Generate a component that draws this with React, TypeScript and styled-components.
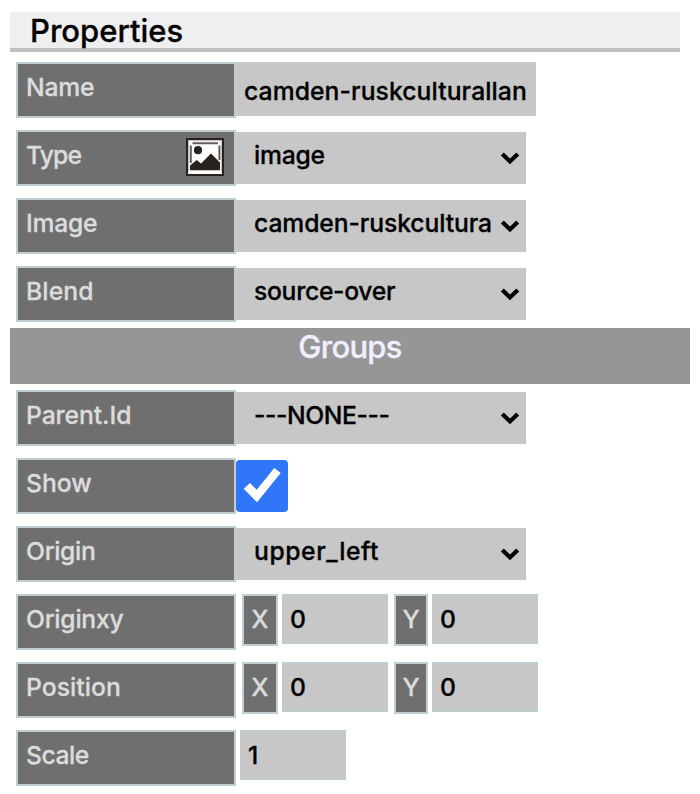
import React from "react";
import styled, { createGlobalStyle } from "styled-components";

const GlobalStyle = createGlobalStyle`
  *, *::before, *::after { box-sizing: border-box; }
  body { margin: 0; background: #fff; }
`;

const Panel = styled.main`
  width: 700px;
  height: 794px;
  overflow: hidden;
  padding: 12px 10px 0;
  background: #fff;
  color: #000;
  font: 500 24.7px/36px Inter, "Liberation Sans", sans-serif;
  -webkit-text-stroke: 0.3px currentColor;
  white-space: nowrap;
`;

const Header = styled.h1`
  width: 670px;
  height: 40px;
  margin: 0;
  padding-left: 20px;
  background: #efefef;
  border-bottom: 4px solid #bfbfbf;
  font-size: 31px;
  font-weight: 500;
  line-height: 38px;
`;

const Section = styled.section`
  display: flex;
  flex-direction: column;
  gap: 12px;
  padding: 10px 6px 6px;
`;

const GroupSection = styled(Section)`
  padding-top: 6px;
`;

const GroupBar = styled.h2`
  height: 56px;
  margin: 0;
  background: #969696;
  color: #f0eeff;
  text-align: center;
  font-size: 31px;
  font-weight: 500;
  line-height: 38px;
  letter-spacing: -0.72px;
`;

const Row = styled.div`
  display: flex;
  align-items: flex-start;
  height: 56px;
`;

const Label = styled.div`
  display: flex;
  justify-content: space-between;
  width: 220px;
  height: 56px;
  padding: 5px 10px 0 8px;
  background: #6f6f6f;
  border: 2px solid #bfcfcf;
  color: #dcdcdc;
`;

const Tracked = styled.span<{ $track?: number }>`
  letter-spacing: ${({ $track = 0 }) => $track}px;
`;

const NameField = styled.div`
  width: 300px;
  height: 54px;
  padding: 11px 0 0 8px;
  overflow: hidden;
  background: #c7c7c7;
`;

const Select = styled.div`
  display: flex;
  justify-content: space-between;
  width: 290px;
  height: 52px;
  margin-top: 2px;
  padding: 5px 6px 0 18px;
  background: #c7c7c7;
`;

const Chevron = styled.svg`
  width: 20px;
  height: 14px;
  margin-top: 14px;
`;

const PictureIcon = styled.svg`
  width: 38px;
  height: 38px;
  margin-top: 1px;
`;

const Checkbox = styled.div`
  width: 52px;
  height: 52px;
  margin-top: 2px;
  border-radius: 4px;
  background: #2f76f8;
`;

const Axis = styled.div<{ $width: number }>`
  width: ${({ $width }) => $width}px;
  height: 52px;
  margin-left: 6px;
  padding-top: 5px;
  background: #6f6f6f;
  border: 2px solid #bfcfcf;
  color: #dcdcdc;
  text-align: center;
`;

const NumberField = styled.div`
  width: 106px;
  height: 50px;
  margin-left: 4px;
  padding: 5px 0 0 8px;
  background: #c7c7c7;
  border: solid #bfcfcf;
  border-width: 2px 0;
`;

interface FieldProps {
  label: string;
  track?: number;
  icon?: React.ReactNode;
  children: React.ReactNode;
}

const Field = ({ label, track, icon, children }: FieldProps) => (
  <Row>
    <Label>
      <Tracked $track={track}>{label}</Tracked>
      {icon}
    </Label>
    {children}
  </Row>
);

const Dropdown = ({ value, track }: { value: string; track?: number }) => (
  <Select>
    <Tracked $track={track}>{value}</Tracked>
    <Chevron viewBox="0 0 20 14">
      <path d="M2.3 2.9 10 10.4l7.7-7.5" fill="none" stroke="#000" strokeWidth="4.2" />
    </Chevron>
  </Select>
);

const Coordinates = () => (
  <>
    <Axis $width={36}>X</Axis>
    <NumberField>0</NumberField>
    <Axis $width={34}>Y</Axis>
    <NumberField>0</NumberField>
  </>
);

const ImageGlyph = () => (
  <PictureIcon viewBox="0 0 38 38">
    <rect width="38" height="38" fill="#28231f" />
    <rect x="2" y="2" width="34" height="34" fill="#fff" />
    <path d="M2.6 34V2.6h32.8V34" fill="none" stroke="#c9c5c5" strokeWidth="1.2" />
    <path d="M4.8 25V7.5M6.5 5.2h25.5M33.4 7.5V22" fill="none" stroke="#625d5c" strokeWidth="2" />
    <circle cx="12" cy="12.2" r="4.1" fill="#28231f" />
    <path d="M4 32.3V27.5l6.8-5.5 4.2 3.5L25 15.5l9 9v7.8z" fill="#28231f" />
  </PictureIcon>
);

export default function App() {
  return (
    <Panel>
      <GlobalStyle />
      <Header>Properties</Header>
      <Section>
        <Field label="Name" track={-0.21}>
          <NameField>
            <Tracked $track={0.08}>camden-ruskculturallan</Tracked>
          </NameField>
        </Field>
        <Field label="Type" track={-0.84} icon={<ImageGlyph />}>
          <Dropdown value="image" track={-0.24} />
        </Field>
        <Field label="Image" track={-0.24}>
          <Dropdown value="camden-ruskcultura" track={-0.1} />
        </Field>
        <Field label="Blend" track={0.1}>
          <Dropdown value="source-over" track={-0.3} />
        </Field>
      </Section>
      <GroupBar>Groups</GroupBar>
      <GroupSection>
        <Field label="Parent.Id" track={-0.08}>
          <Dropdown value="---NONE---" track={-0.42} />
        </Field>
        <Field label="Show">
          <Checkbox>
            <svg width="52" height="52" viewBox="0 0 52 52">
              <path d="M7.7 28.7 14 23l6.7 6.7L38.3 8l6.4 5L21 42.3z" fill="#fff" />
            </svg>
          </Checkbox>
        </Field>
        <Field label="Origin" track={-0.3}>
          <Dropdown value="upper_left" track={0.58} />
        </Field>
        <Field label="Originxy" track={-0.23}>
          <Coordinates />
        </Field>
        <Field label="Position" track={0.05}>
          <Coordinates />
        </Field>
        <Field label="Scale" track={-0.49}>
          <NumberField>1</NumberField>
        </Field>
      </GroupSection>
    </Panel>
  );
}
